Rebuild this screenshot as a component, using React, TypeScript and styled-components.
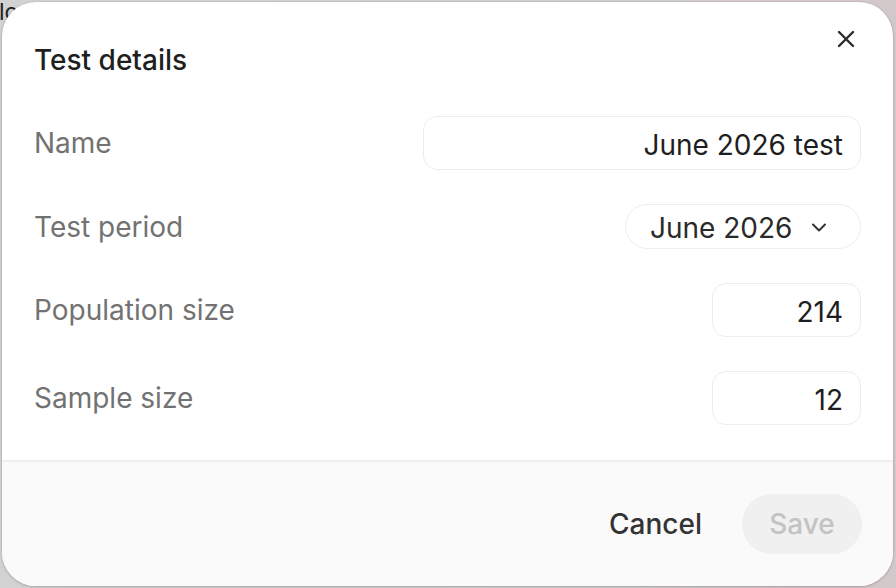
import React from 'react';
import styled, { createGlobalStyle } from 'styled-components';

const GlobalStyle = createGlobalStyle`
  html, body {
    margin: 0;
    padding: 0;
    height: 100%;
  }
  body {
    font-family: Inter, "Noto Sans", "Liberation Sans", sans-serif;
    -webkit-font-smoothing: antialiased;
  }
  #root {
    height: 100%;
  }
`;

const Backdrop = styled.div`
  position: relative;
  width: 896px;
  height: 588px;
  overflow: hidden;
  background: linear-gradient(90deg, #d2d2d2 0%, #cfcfcf 70%, #d6c6ca 88%, #d2c8ca 100%);
  display: flex;
  padding: 2px 3px 2px 2px;
  box-sizing: border-box;
`;

// bit of the page peeking out from behind the overlay
const PageText = styled.span`
  position: absolute;
  left: -1px;
  top: -2px;
  font-size: 23px;
  color: #222;
`;

const Dialog = styled.div`
  position: relative;
  flex: 1;
  display: flex;
  flex-direction: column;
  background: #ffffff;
  border-radius: 34px;
  overflow: hidden;
  box-shadow: 0 1px 3px rgba(0, 0, 0, 0.18), 0 0 0 1px rgba(0, 0, 0, 0.04);
`;

const Header = styled.div`
  padding: 41px 32px 0 32px;
`;

const Title = styled.h2`
  margin: 0;
  font-size: 28px;
  line-height: 34px;
  font-weight: 500;
  color: #1f1f1f;
`;

const CloseButton = styled.button`
  position: absolute;
  top: 21px;
  right: 31px;
  width: 32px;
  height: 32px;
  display: flex;
  align-items: center;
  justify-content: center;
  padding: 0;
  border: none;
  background: transparent;
  color: #2b2b2b;
  cursor: pointer;
`;

const Body = styled.div`
  flex: 1;
  display: flex;
  flex-direction: column;
  gap: 34px;
  padding: 39px 32px 0 32px;
`;

const Row = styled.div`
  display: flex;
  align-items: center;
  justify-content: space-between;
`;

const Label = styled.label`
  font-size: 28px;
  color: #727272;
  font-weight: 400;
`;

const Field = styled.input<{ $width: number }>`
  box-sizing: border-box;
  width: ${p => p.$width}px;
  height: 54px;
  border: 1.5px solid #ececec;
  border-radius: 14px;
  background: #fff;
  padding: 4px 17px 0 16px;
  font-family: inherit;
  font-size: 28px;
  color: #1e1e1e;
  text-align: right;
  outline: none;
`;

const SelectPill = styled.button`
  box-sizing: border-box;
  flex-shrink: 0;
  width: 236px;
  height: 45px;
  display: flex;
  align-items: center;
  justify-content: space-between;
  padding: 2px 33px 0 24px;
  border: 1.5px solid #ececec;
  border-radius: 23px;
  background: #fff;
  font-family: inherit;
  font-size: 28px;
  color: #2a2a2a;
  white-space: nowrap;
  cursor: pointer;
`;

const Footer = styled.div`
  height: 126px;
  box-sizing: border-box;
  border-top: 2px solid #efefef;
  background: #fafafa;
  display: flex;
  align-items: center;
  justify-content: flex-end;
  gap: 28px;
  padding: 0 31px 0 33px;
`;

const TextButton = styled.button`
  border: none;
  background: transparent;
  padding: 0 12px;
  height: 60px;
  font-family: inherit;
  font-size: 28px;
  font-weight: 500;
  color: #333;
  cursor: pointer;
`;

const PrimaryButton = styled.button<{ $disabled?: boolean }>`
  width: 120px;
  height: 60px;
  border: none;
  border-radius: 30px;
  background: ${p => (p.$disabled ? '#f0f0f0' : '#1f1f1f')};
  color: ${p => (p.$disabled ? '#c3c3c3' : '#fff')};
  font-family: inherit;
  font-size: 28px;
  font-weight: 500;
  cursor: ${p => (p.$disabled ? 'default' : 'pointer')};
`;

const CloseIcon = () => (
  <svg width="18" height="18" viewBox="0 0 18 18" fill="none">
    <path d="M2 2L16 16M16 2L2 16" stroke="currentColor" strokeWidth="2.4" strokeLinecap="round" />
  </svg>
);

const Chevron = () => (
  <svg width="16" height="9" viewBox="0 0 16 9" fill="none">
    <path d="M2 1.5L8 7.5L14 1.5" stroke="#333" strokeWidth="2" strokeLinecap="round" strokeLinejoin="round" />
  </svg>
);

export default function App() {
  return (
    <>
      <GlobalStyle />
      <Backdrop>
        <PageText>lo</PageText>
        <Dialog role="dialog" aria-label="Test details">
          <Header>
            <Title>Test details</Title>
          </Header>
          <CloseButton aria-label="Close">
            <CloseIcon />
          </CloseButton>

          <Body>
            <Row>
              <Label>Name</Label>
              <Field $width={438} defaultValue="June 2026 test" />
            </Row>
            <Row>
              <Label>Test period</Label>
              <SelectPill>
                <span>June 2026</span>
                <Chevron />
              </SelectPill>
            </Row>
            <Row>
              <Label>Population size</Label>
              <Field $width={149} defaultValue="214" />
            </Row>
            <Row>
              <Label>Sample size</Label>
              <Field $width={149} defaultValue="12" />
            </Row>
          </Body>

          <Footer>
            <TextButton>Cancel</TextButton>
            <PrimaryButton $disabled>Save</PrimaryButton>
          </Footer>
        </Dialog>
      </Backdrop>
    </>
  );
}
